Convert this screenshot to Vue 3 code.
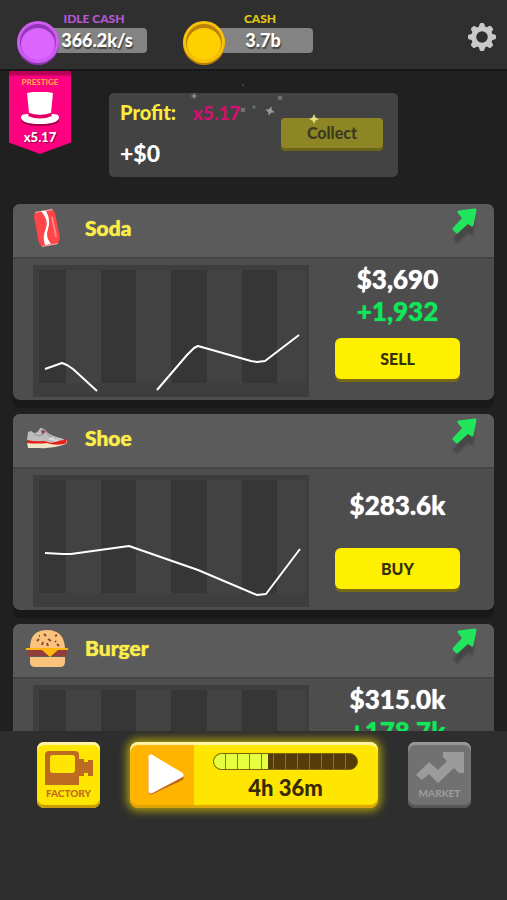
<template>
  <div class="game">
    <header class="top-bar">
      <div v-for="wallet in wallets" :key="wallet.name" :class="['wallet', wallet.name]">
        <svg class="coin" viewBox="0 0 42 44" aria-hidden="true">
          <ellipse class="coin-edge" cx="21" cy="23" rx="21" ry="21" />
          <circle class="coin-face" cx="21" cy="21" r="21" />
          <circle class="coin-rim" cx="21" cy="21" r="18" />
          <ellipse class="coin-inner" cx="21" cy="23" rx="17" ry="16" />
        </svg>
        <div class="wallet-info">
          <span class="wallet-label">{{ wallet.label }}</span>
          <span class="wallet-value">{{ wallet.value }}</span>
        </div>
      </div>
      <button class="settings-btn" aria-label="Settings">
        <svg viewBox="0 0 28 28">
          <path
            fill="#c9c9c9"
            fill-rule="evenodd"
            d="M11.5 1.5q.3-1.5 1.5-1.5h2q1.2 0 1.5 1.500l.5 2 2 .8 2-1.200q1.200-.7 2 .2l1.600 1.600q.9.9.2 2l-1.200 2 .8 2 2.100.5q1.500.3 1.500 1.600v2q0 1.200-1.500 1.500l-2.100.5-.8 2 1.200 2q.7 1.200-.2 2l-1.600 1.600q-.9.9-2 .2l-2-1.200-2 .8-.5 2.100q-.3 1.500-1.500 1.500h-2q-1.200 0-1.500-1.500l-.5-2.100-2-.8-2 1.200q-1.200.7-2-.2l-1.600-1.600q-.9-.9-.2-2l1.200-2-.8-2-2.100-.5q-1.500-.3-1.500-1.500v-2q0-1.200 1.500-1.500l2.100-.5.8-2-1.200-2q-.7-1.200.2-2l1.600-1.600q.9-.9 2-.2l2 1.200 2-.8zM14 8.200a5.800 5.800 0 1 0 0 11.600a5.800 5.800 0 1 0 0-11.600z"
          />
        </svg>
      </button>
    </header>

    <main class="market">
      <section class="summary">
        <button class="prestige">
          <span class="prestige-label">PRESTIGE</span>
          <svg class="hat" viewBox="0 0 40 34" aria-hidden="true">
            <path d="M1 28q0-2 8-2h22q8 0 8 2q0 6-19 6T1 28z" fill="#a8004f" />
            <path d="M1 25q0-3 7-3q12 5 24 0q7 0 7 3q0 7-19 7T1 25z" fill="#fff" />
            <path d="M7 1q13-3 26 0l-2 20q-11 4-22 0z" fill="#fff" />
            <path d="M9 21q11 4 22 0l1 3q-12 5-24 0z" fill="#e00068" />
          </svg>
          <span class="prestige-value">x5.17</span>
        </button>

        <div class="profit">
          <div class="profit-text">
            <p class="profit-line">Profit: <span class="multiplier">x5.17</span></p>
            <p class="profit-amount">+$0</p>
          </div>
          <button class="collect-btn" disabled>Collect</button>
          <svg class="sparkles" viewBox="0 0 289 95" aria-hidden="true">
            <path
              v-for="(s, i) in sparkles"
              :key="i"
              d="M0-5L1.500-1.500L5 0L1.500 1.500L0 5L-1.500 1.500L-5 0L-1.500-1.500z"
              :transform="`translate(${s.x} ${s.y}) rotate(${s.turn}) scale(${s.size})`"
              :fill="s.color"
            />
          </svg>
        </div>
      </section>

      <article v-for="stock in stocks" :key="stock.name" class="stock">
        <div class="stock-header">
          <svg v-if="stock.name === 'Soda'" class="stock-icon" viewBox="0 0 42 42">
            <path d="M9 4L26 1L29 5L34 30L32 36L16 39L13 35L8 9z" fill="#ff4548" />
            <path d="M9 4L26 1L27 2L9 5z" fill="#d9b3b3" />
            <path d="M16 38L32 35L32 36L16 39z" fill="#d9b3b3" />
            <path d="M15 3h5q5 9 2 18q-3 8 3 15l-6 1q-3-8 1-17q3-8-5-17z" fill="#fff" />
            <path d="M26 9l4 20" stroke="#ff8583" stroke-width="2" fill="none" />
          </svg>
          <svg v-else-if="stock.name === 'Shoe'" class="stock-icon" viewBox="0 0 42 42">
            <path d="M1 22q10 1 20 1l20-1q1 4-4 5q-12 4-23 3H2q-1-4-1-8z" fill="#efe6c8" />
            <path d="M1 20l16 1 23 0q2 4-2 5-10 2-17-1-10 1-20 0z" fill="#ea1c16" />
            <path d="M2 14l3-1 3 2q4 0 6-5h2l3 2q5 6 16 8l4 2-9 1-4 2-8-2q-9 1-17-1z" fill="#bdbdbd" />
            <path d="M15 11l4 3 6 5M8 16l5 2 5-2M20 13l-4 4" stroke="#929292" fill="none" />
            <path d="M15 13l3-1 1 2-3 2z" fill="#a5383a" />
            <path d="M23 21l4 0 2 2 4-1" stroke="#d9d9d9" stroke-width="2" fill="none" />
          </svg>
          <svg v-else class="stock-icon" viewBox="0 0 42 42">
            <path d="M4 20Q4 2 21 2T39 20z" fill="#fac37d" />
            <path
              d="M11 13l2-2M18 6l2 2M16 17l1-3M22 11l3 2M22 18l-1-3M29 8l2-1M31 16l2 2M14 8l-1 0M29 13l1 1"
              stroke="#8b4a38"
              stroke-width="2"
            />
            <rect x="1" y="22" width="40" height="6" rx="2" fill="#8f3e3b" />
            <path d="M0 20h42v2H32l-8 7-8-7H0z" fill="#ffb60c" />
            <path d="M4 29h35v5q0 5-5 5H9q-5 0-5-5z" fill="#fac37d" />
          </svg>
          <h2 class="stock-name">{{ stock.name }}</h2>
          <svg class="trend" viewBox="0 0 26 38" aria-label="Rising">
            <path class="trend-shadow" d="M8 13L24 12L22 28L17 25L6 36L2 31L12 19z" />
            <path
              d="M8 4L24 2L21 17L17 14L6 24L3 21L13 10z"
              fill="#21e65d"
              stroke="#21e65d"
              stroke-width="3"
              stroke-linejoin="round"
            />
          </svg>
        </div>

        <div class="stock-body">
          <svg class="chart" viewBox="0 0 276 132" role="img" :aria-label="stock.name + ' price'">
            <rect width="276" height="132" fill="#3e3e3e" />
            <rect x="33" y="5" width="239" height="113" fill="#424242" />
            <rect
              v-for="band in bands"
              :key="band.x"
              :x="band.x"
              y="5"
              :width="band.width"
              height="113"
              fill="#363636"
            />
            <polyline v-for="line in stock.lines" :key="line" :points="line" class="chart-line" />
          </svg>
          <div class="stock-side">
            <div class="stock-values">
              <span class="price">{{ stock.price }}</span>
              <span v-if="stock.change" class="change">{{ stock.change }}</span>
            </div>
            <button class="trade-btn">{{ stock.action }}</button>
          </div>
        </div>
      </article>
    </main>

    <footer class="bottom-bar">
      <button class="tile factory">
        <svg viewBox="0 0 48 34" aria-hidden="true">
          <path
            fill="#bd6b20"
            fill-rule="evenodd"
            d="M4 0h26q4 0 4 4v4h5v3h4V9h5v16h-5v-3h-4v3h-5v9H0V4q0-4 4-4zM8 4q-3 0-3 3v12q0 3 3 3h19q3 0 3-3V7q0-3-3-3z"
          />
        </svg>
        <span>FACTORY</span>
      </button>

      <button class="play">
        <span class="play-icon">
          <svg viewBox="0 0 38 44" aria-hidden="true">
            <path d="M4 7v32L34 25z" fill="#c26316" stroke="#c26316" stroke-width="5" stroke-linejoin="round" />
            <path d="M4 4v34L34 22z" fill="#fff" stroke="#fff" stroke-width="5" stroke-linejoin="round" />
          </svg>
        </span>
        <span class="play-info">
          <span class="progress">
            <span class="progress-fill" :style="{ width: progress + '%' }"></span>
          </span>
          <span class="time-left">4h 36m</span>
        </span>
      </button>

      <button class="tile market-tile">
        <svg viewBox="0 0 48 34" aria-hidden="true">
          <path d="M0 24L13 11L22 19L31 10L27 6V1H48V22H43L38 17L22 32L13 23L6 29z" fill="#9b9b9b" />
        </svg>
        <span>MARKET</span>
      </button>
    </footer>
  </div>
</template>

<script setup>
import { ref } from 'vue'

const wallets = ref([
  { name: 'idle', label: 'IDLE CASH', value: '366.2k/s' },
  { name: 'cash', label: 'CASH', value: '3.7b' }
])

const stocks = ref([
  {
    name: 'Soda',
    price: '$3,690',
    change: '+1,932',
    action: 'SELL',
    lines: ['12,104 29,98 34,100 40,104 64,126', '124,125 154,90 161,83 165,81 218,96 224,97 232,96 266,70']
  },
  {
    name: 'Shoe',
    price: '$283.6k',
    change: '',
    action: 'BUY',
    lines: ['12,78 30,79 38,79 96,71 165,95 224,120 233,119 267,74']
  },
  {
    name: 'Burger',
    price: '$315.0k',
    change: '+178.7k',
    action: 'SELL',
    lines: ['12,110 60,98 130,104 200,84 266,70']
  }
])

// dark columns behind the price line
const bands = [
  { x: 6, width: 27 },
  { x: 68, width: 35 },
  { x: 138, width: 36 },
  { x: 209, width: 35 }
]

const sparkles = [
  { x: 85, y: 15, turn: 0, size: 0.7, color: '#8b8b8b' },
  { x: 134, y: 4, turn: 0, size: 0.3, color: '#555' },
  { x: 134, y: 29, turn: 45, size: 0.7, color: '#7b7b7b' },
  { x: 145, y: 26, turn: 45, size: 0.5, color: '#777' },
  { x: 161, y: 30, turn: 15, size: 1, color: '#9a9a9a' },
  { x: 171, y: 17, turn: 45, size: 0.7, color: '#777' },
  { x: 205, y: 38, turn: 0, size: 1, color: '#e6dc80' }
]

const progress = ref(38)
</script>

<style>
body {
  margin: 0;
  background: #2e2e2e;
}
</style>

<style scoped>
.game {
  display: flex;
  flex-direction: column;
  height: 100vh;
  font-family: Lato, 'Liberation Sans', sans-serif;
  font-weight: 900;
  color: #fff;
  background: #202020;
}

button {
  padding: 0;
  border: none;
  font-family: inherit;
  font-weight: inherit;
  cursor: pointer;
}

/* top bar */
.top-bar {
  display: flex;
  align-items: flex-start;
  gap: 36px;
  padding: 10px 11px 4px 17px;
  background: #2f2f2f;
  border-bottom: 2px solid #181818;
}

.wallet {
  display: flex;
  width: 130px;
}

.coin {
  position: relative;
  flex-shrink: 0;
  width: 42px;
  height: 44px;
  margin: 11px -18px 0 0;
}

.idle .coin-edge { fill: #8c35b0; }
.idle .coin-face { fill: #cf5cf0; }
.idle .coin-rim { fill: #9238b8; }
.idle .coin-inner { fill: #dc64ff; }
.cash .coin-edge { fill: #bd7f0c; }
.cash .coin-face { fill: #f8c20a; }
.cash .coin-rim { fill: #bd800c; }
.cash .coin-inner { fill: #ffd000; }

.wallet-info {
  flex: 1;
  display: flex;
  flex-direction: column;
  text-align: center;
}

.wallet-label {
  font-size: 12px;
  line-height: 18px;
}

.idle .wallet-label { color: #b757d8; }
.cash .wallet-label { color: #e8c616; }

.wallet-value {
  padding-left: 6px;
  font-size: 18px;
  line-height: 25px;
  border-radius: 4px;
  background: #838383;
  text-shadow: 1px 2px 1px #444;
}

.settings-btn {
  margin: 13px 0 0 auto;
  width: 28px;
  height: 28px;
  background: none;
}

.settings-btn svg {
  display: block;
}

/* market list */
.market {
  flex: 1;
  min-height: 0;
  overflow-y: auto;
  scrollbar-width: none;
  padding: 0 13px;
}

.summary {
  display: flex;
  align-items: flex-start;
  gap: 38px;
  margin: 0 0 27px -4px;
}

.prestige {
  display: flex;
  flex-direction: column;
  align-items: center;
  width: 62px;
  height: 83px;
  color: #fff;
  background: linear-gradient(#b80058, #b80058 3px, #ff0080 6px);
  clip-path: polygon(0 0, 100% 0, 100% 86%, 50% 100%, 0 86%);
}

.prestige-label {
  margin-top: 5px;
  font-size: 8px;
  line-height: 12px;
  color: #ffa050;
}

.hat {
  width: 40px;
  height: 34px;
  margin-top: 4px;
}

.prestige-value {
  margin-top: 1px;
  font-size: 13px;
  line-height: 20px;
  text-shadow: 1px 1px 1px #8a0045;
}

.profit {
  position: relative;
  display: flex;
  align-items: center;
  justify-content: space-between;
  flex: 0 1 289px;
  box-sizing: border-box;
  margin-top: 22px;
  padding: 5px 15px 10px 11px;
  border-radius: 5px;
  background: #434343;
}

.profit-text {
  display: flex;
  flex-direction: column;
  gap: 12px;
}

.profit p {
  margin: 0;
  line-height: 28px;
}

.profit-line {
  font-size: 20px;
  color: #fbec3c;
}

.multiplier {
  margin-left: 12px;
  font-size: 19px;
  color: #d40f70;
}

.profit-amount {
  font-size: 23px;
}

.collect-btn {
  width: 102px;
  font-size: 16px;
  line-height: 30px;
  color: #3c3a22;
  border-radius: 4px;
  background: #8e8525;
  box-shadow: 0 3px 0 #6a6516;
}

.sparkles {
  position: absolute;
  left: 0;
  top: -12px;
  width: 100%;
  pointer-events: none;
}

/* stock cards */
.stock {
  margin-bottom: 14px;
  border-radius: 7px;
  background: #4d4d4d;
  box-shadow: 0 8px 0 #191919;
}

.stock-header {
  display: flex;
  align-items: flex-start;
  padding: 4px 17px 7px 13px;
  border-radius: 7px 7px 0 0;
  border-bottom: 2px solid #444;
  background: #5b5b5b;
}

.stock-icon {
  width: 42px;
  height: 42px;
}

.stock-name {
  flex: 1;
  margin: 0 0 0 17px;
  font-size: 21px;
  line-height: 40px;
  font-weight: 900;
  color: #fbec4c;
  text-shadow: 0 0 1px #fbec4c;
}

.trend {
  width: 26px;
  height: 38px;
}

.trend-shadow {
  fill: #3a3a3a;
  opacity: 0.6;
  filter: blur(1px);
}

.stock-body {
  display: flex;
  align-items: flex-start;
  padding-left: 20px;
}

.chart {
  flex: 1;
  min-width: 0;
  margin: 6px 0 3px;
}

.chart-line {
  fill: none;
  stroke: #fff;
  stroke-width: 2;
  stroke-linejoin: round;
}

.stock-side {
  display: flex;
  flex-direction: column;
  width: 125px;
  padding: 4px 34px 0 26px;
}

.stock-values {
  display: flex;
  flex-direction: column;
  justify-content: center;
  align-items: center;
  height: 64px;
  margin-bottom: 11px;
  font-size: 26px;
  line-height: 32px;
  text-shadow: 0 0 1px currentColor;
}

.change {
  color: #10e658;
}

.trade-btn {
  font-size: 16px;
  line-height: 41px;
  color: #33300c;
  border-radius: 6px;
  background: #fff000;
  box-shadow: 0 3px 0 #7b6a14;
}

/* bottom bar */
.bottom-bar {
  display: flex;
  gap: 30px;
  padding: 11px 36px 92px 37px;
  background: #2e2e2e;
}

.tile {
  display: flex;
  flex-direction: column;
  align-items: center;
  width: 63px;
  height: 66px;
  border-radius: 7px;
  font-size: 10px;
  line-height: 14px;
}

.tile svg {
  width: 48px;
  height: 34px;
  margin: 9px 0 1px;
}

.factory {
  color: #bd6b20;
  background: #ffe600;
  box-shadow: inset 0 3px 1px #fff3a8, inset 0 -3px 1px #c79a08;
}

.market-tile {
  color: #9b9b9b;
  background: #717171;
  box-shadow: inset 0 3px 1px #999, inset 0 -3px 1px #555;
}

.play {
  flex: 1;
  display: flex;
  height: 66px;
  border-radius: 8px;
  background: linear-gradient(90deg, #ffb400 64px, #ffe600 64px);
  box-shadow: 0 0 8px 3px #a89a10, inset 0 3px 1px #fff3a8, inset 0 -3px 1px #dba408;
}

.play-icon {
  display: flex;
  align-items: center;
  justify-content: center;
  width: 64px;
  height: 66px;
}

.play-icon svg {
  width: 38px;
  height: 44px;
  margin-left: 8px;
}

.play-info {
  flex: 1;
  display: flex;
  flex-direction: column;
  padding: 11px 20px 0 19px;
}

.progress {
  position: relative;
  height: 15px;
  overflow: hidden;
  border: 1px solid #7a6408;
  border-radius: 9px;
  background: #543c08;
}

.progress-fill {
  display: block;
  height: 100%;
  background: #e6ff3e;
}

.progress::after {
  content: '';
  position: absolute;
  inset: 0;
  background: repeating-linear-gradient(90deg, transparent 0 11px, #8a7a14 11px 12px);
}

.time-left {
  margin-top: 3px;
  font-size: 22px;
  line-height: 30px;
  color: #3a2a04;
}
</style>
